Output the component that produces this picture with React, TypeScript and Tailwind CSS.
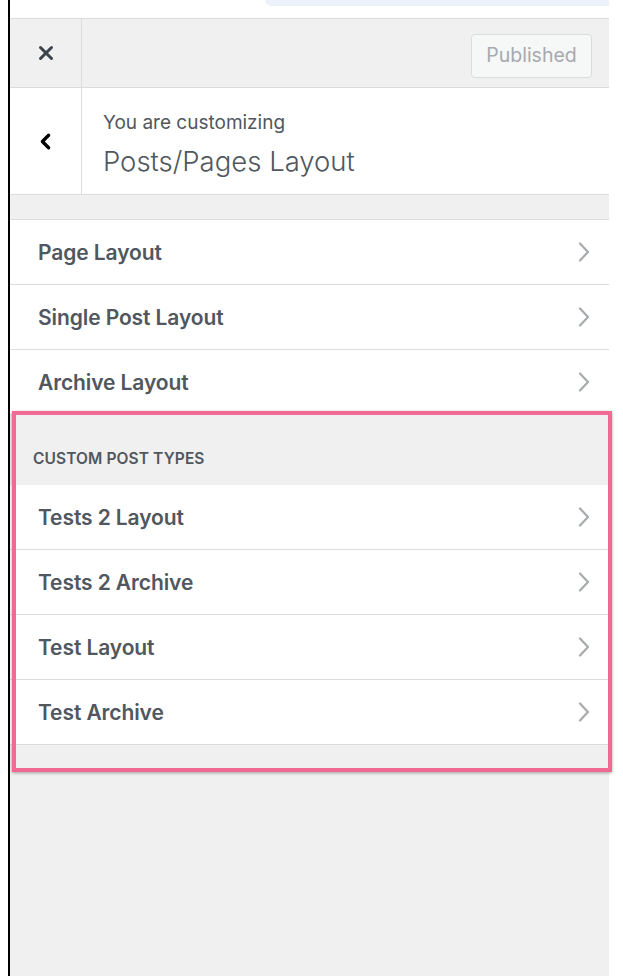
import { X, ChevronLeft } from 'lucide-react'

// WordPress customizer sidebar — "Posts/Pages Layout" panel with the
// custom post types group called out by a pink annotation box.

const MAIN = ['Page Layout', 'Single Post Layout', 'Archive Layout']
const CPT = ['Tests 2 Layout', 'Tests 2 Archive', 'Test Layout', 'Test Archive']

function Chevron() {
  return (
    <svg width="14" height="22" viewBox="0 0 14 22" fill="none" className="shrink-0">
      <path d="M3 2.5 L11 11 L3 19.5" stroke="#a7aaad" strokeWidth="2.2" strokeLinecap="round" strokeLinejoin="round" />
    </svg>
  )
}

function Row({ label }: { label: string }) {
  return (
    <div className="flex h-[65px] shrink-0 items-center justify-between border-b border-[#dcdcde] bg-white pl-[28px] pr-[18px]">
      <span className="pt-[1px] text-[21px] font-semibold tracking-[-0.1px] text-[#50575e]">{label}</span>
      <Chevron />
    </div>
  )
}

export default function App() {
  return (
    <div className="relative flex h-[976px] w-[623px] overflow-hidden bg-white font-['Inter','Liberation_Sans',sans-serif]">
      <div className="w-[8px] shrink-0" />
      <div className="flex w-[601px] shrink-0 flex-col border-l-2 border-black bg-[#f0f0f1]">
        {/* top strip (preview frame edge) */}
        <div className="flex h-[19px] shrink-0 justify-end border-b border-[#dcdcde] bg-white">
          <div className="h-[6px] w-[344px] rounded-bl-[18px] bg-[#edf1f9]" />
        </div>

        {/* header actions */}
        <div className="flex h-[69px] shrink-0 items-center border-b border-[#dcdcde] bg-[#f0f0f1]">
          <div className="flex h-full w-[72px] items-center justify-center border-r border-[#dcdcde]">
            <X size={22} strokeWidth={3.2} className="text-[#3c434a]" />
          </div>
          <div className="flex-1" />
          <div className="mr-[17px] mt-[6px] flex h-[44px] w-[121px] items-center justify-center rounded-[4px] border border-[#dcdcde] bg-[#f6f7f7] text-[19.5px] text-[#a7aaad]">
            Published
          </div>
        </div>

        {/* you are customizing */}
        <div className="flex h-[107px] shrink-0 border-b border-[#dcdcde] bg-white">
          <div className="flex w-[72px] items-center justify-center border-r border-[#dcdcde]">
            <ChevronLeft size={25} strokeWidth={3.2} className="text-black" />
          </div>
          <div className="flex flex-col justify-center pl-[21px] pt-[6px]">
            <span className="text-[19px] leading-[24px] text-[#50575e]">You are customizing</span>
            <span className="mt-[9px] text-[27.5px] font-light leading-[34px] text-[#50575e]">Posts/Pages Layout</span>
          </div>
        </div>

        <div className="h-[25px] shrink-0 border-b border-[#dcdcde]" />

        {MAIN.map((m) => (
          <Row key={m} label={m} />
        ))}

        <div className="flex h-[70px] shrink-0 items-end pb-[15px] pl-[23px]">
          <span className="text-[15.5px] font-semibold uppercase tracking-[0.1px] text-[#50575e]">Custom Post Types</span>
        </div>

        {CPT.map((c) => (
          <Row key={c} label={c} />
        ))}
      </div>
      <div className="flex-1" />

      {/* annotation box */}
      <div className="pointer-events-none absolute left-[12px] top-[411px] h-[361px] w-[600px] border-4 border-[#f06a93] shadow-[0_1px_3px_rgba(0,0,0,0.35)]" />
    </div>
  )
}
